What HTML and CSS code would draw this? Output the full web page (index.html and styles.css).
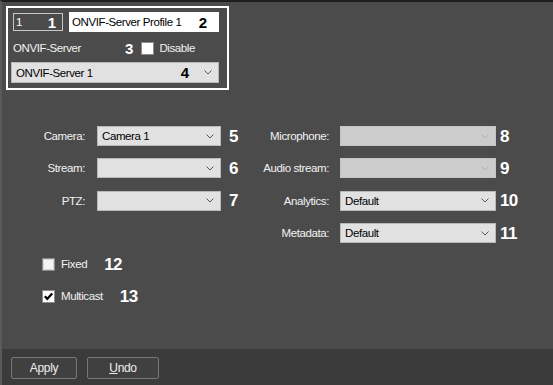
FILE: index.html
```html
<!DOCTYPE html>
<html>
<head>
<meta charset="utf-8">
<link rel="stylesheet" href="styles.css">
</head>
<body>
<div class="window">
  <main class="content">
    <section class="profile-box">
      <div class="row-ids">
        <div class="field field-id"><span>1</span><b class="num num-sm num-light">1</b></div>
        <div class="field field-name"><span>ONVIF-Server Profile 1</span><b class="num num-sm">2</b></div>
      </div>
      <div class="row-server">
        <span class="label">ONVIF-Server</span>
        <b class="num num-sm num-light num-3">3</b>
        <span class="checkbox"></span>
        <span class="label">Disable</span>
      </div>
      <div class="combo combo-server">
        <span class="combo-text">ONVIF-Server 1</span>
        <b class="num num-sm num-4">4</b>
        <svg class="chev" width="8" height="5" viewBox="0 0 8 5"><path d="M0.5 0.5 L4 4 L7.5 0.5" fill="none" stroke="#5a5a5a" stroke-width="1"/></svg>
      </div>
    </section>

    <section class="fields">
      <div class="col col-left">
        <div class="frow"><span class="flabel">Camera:</span><div class="combo"><span class="combo-text">Camera 1</span><svg class="chev" width="8" height="5" viewBox="0 0 8 5"><path d="M0.5 0.5 L4 4 L7.5 0.5" fill="none" stroke="#5a5a5a"/></svg></div><b class="num num-lg">5</b></div>
        <div class="frow"><span class="flabel">Stream:</span><div class="combo"><span class="combo-text"></span><svg class="chev" width="8" height="5" viewBox="0 0 8 5"><path d="M0.5 0.5 L4 4 L7.5 0.5" fill="none" stroke="#5a5a5a"/></svg></div><b class="num num-lg">6</b></div>
        <div class="frow"><span class="flabel">PTZ:</span><div class="combo"><span class="combo-text"></span><svg class="chev" width="8" height="5" viewBox="0 0 8 5"><path d="M0.5 0.5 L4 4 L7.5 0.5" fill="none" stroke="#5a5a5a"/></svg></div><b class="num num-lg">7</b></div>
      </div>
      <div class="col col-right">
        <div class="frow"><span class="flabel">Microphone:</span><div class="combo combo-disabled"><span class="combo-text"></span><svg class="chev" width="8" height="5" viewBox="0 0 8 5"><path d="M0.5 0.5 L4 4 L7.5 0.5" fill="none" stroke="#b0b0b0"/></svg></div><b class="num num-lg">8</b></div>
        <div class="frow"><span class="flabel">Audio stream:</span><div class="combo combo-disabled"><span class="combo-text"></span><svg class="chev" width="8" height="5" viewBox="0 0 8 5"><path d="M0.5 0.5 L4 4 L7.5 0.5" fill="none" stroke="#b0b0b0"/></svg></div><b class="num num-lg">9</b></div>
        <div class="frow"><span class="flabel">Analytics:</span><div class="combo"><span class="combo-text">Default</span><svg class="chev" width="8" height="5" viewBox="0 0 8 5"><path d="M0.5 0.5 L4 4 L7.5 0.5" fill="none" stroke="#5a5a5a"/></svg></div><b class="num num-lg">10</b></div>
        <div class="frow"><span class="flabel">Metadata:</span><div class="combo"><span class="combo-text">Default</span><svg class="chev" width="8" height="5" viewBox="0 0 8 5"><path d="M0.5 0.5 L4 4 L7.5 0.5" fill="none" stroke="#5a5a5a"/></svg></div><b class="num num-lg">11</b></div>
      </div>
    </section>

    <section class="checks">
      <div class="crow"><span class="checkbox checkbox-off"></span><span class="label">Fixed</span><b class="num num-lg num-light">12</b></div>
      <div class="crow"><span class="checkbox"><svg width="11" height="11" viewBox="0 0 11 11"><path d="M1.8 5.2 L4.3 7.8 L9.2 2.4" fill="none" stroke="#000" stroke-width="2.2"/></svg></span><span class="label">Multicast</span><b class="num num-lg num-light">13</b></div>
    </section>
  </main>
  <footer class="footer">
    <button class="btn btn-apply">Apply</button>
    <button class="btn btn-undo"><u>U</u>ndo</button>
  </footer>
</div>
</body>
</html>
```

FILE: styles.css
```css
* { box-sizing: border-box; }
html, body { margin: 0; padding: 0; }
body {
  width: 553px;
  height: 385px;
  overflow: hidden;
  background: #4b4b4b;
  font-family: "Liberation Sans", Arial, sans-serif;
  font-size: 11.5px;
  letter-spacing: -0.4px;
  color: #f2f2f2;
}
.window {
  width: 553px;
  height: 385px;
  display: flex;
  flex-direction: column;
  border-top: 2px solid #1f1f1f;
  border-left: 2px solid #5a5a5a;
}
.content {
  flex: 1;
  padding: 4px 0 0 4px;
}
.profile-box {
  width: 223px;
  height: 84px;
  border: 2px solid #ffffff;
  padding: 4px 8px 5px 3px;
  display: flex;
  flex-direction: column;
}
.row-ids {
  display: flex;
  align-items: center;
  padding-left: 2px;
  gap: 6px;
  height: 20px;
}
.field {
  display: flex;
  align-items: center;
  justify-content: space-between;
}
.field-id {
  width: 50px;
  height: 18px;
  border: 1px solid #c8c8c8;
  padding: 0 6px 0 2px;
  color: #ffffff;
}
.field-name {
  width: 150px;
  height: 20px;
  background: #ffffff;
  color: #000;
  padding: 0 12px 0 3px;
}
.num {
  font-family: "Liberation Sans", Arial, sans-serif;
  font-weight: bold;
  color: #000;
  line-height: 1;
  letter-spacing: 0;
}
.num-sm { font-size: 15px; }
.num-lg {
  font-size: 17px;
  letter-spacing: -0.6px;
  color: #ffffff;
}
.num-light { color: #ffffff; }
.row-server {
  display: flex;
  align-items: center;
  height: 16px;
  margin-top: 8px;
  padding-left: 2px;
}
.num-3 { margin-left: 44px; }
.row-server .checkbox { margin-left: 8px; margin-right: 5px; }
.checkbox {
  display: inline-flex;
  align-items: center;
  justify-content: center;
  width: 13px;
  height: 13px;
  background: #ffffff;
  border: 1px solid #8c8c8c;
  flex: none;
}
.checkbox-off {
  background: #f4f4f4;
  box-shadow: inset 0 0 0 1px #d6d6d6;
}
.combo {
  display: flex;
  align-items: center;
  height: 20px;
  background: #e1e1e1;
  border: 1px solid #b9b9b9;
  color: #000;
  padding: 0 6px 0 4px;
}
.combo-text { flex: 1; white-space: nowrap; }
.combo-server {
  width: 208px;
  height: 21px;
  margin-top: 6px;
}
.num-4 { margin-right: 15px; }
.chev { flex: none; }
.combo-disabled {
  background: #cccccc;
  border-color: #c4c4c4;
}
.fields {
  display: flex;
  gap: 10px;
  margin-top: 36px;
  padding-left: 19px;
}
.col {
  display: flex;
  flex-direction: column;
  gap: 12.4px;
}
.frow {
  display: flex;
  align-items: center;
  height: 20px;
}
.flabel {
  text-align: right;
  white-space: nowrap;
}
.col-left .flabel { width: 60px; margin-right: 12px; }
.col-left .combo { width: 124px; }
.col-left .num { margin-left: 8px; width: 20px; }
.col-right .flabel { width: 70px; margin-right: 11px; }
.col-right .combo { width: 156px; }
.col-right .num { margin-left: 4px; }
.checks {
  display: flex;
  flex-direction: column;
  gap: 16px;
  margin-top: 13px;
  padding-left: 36px;
}
.crow {
  display: flex;
  align-items: center;
  height: 16px;
}
.crow .checkbox { margin-right: 6px; }
.crow .num { margin-left: 17px; }
.footer {
  height: 36px;
  background: #3b3b3b;
  display: flex;
  align-items: flex-start;
  gap: 10px;
  padding: 8px 0 0 9px;
}
.btn {
  height: 22px;
  background: #404040;
  border: 1px solid #777777;
  border-radius: 2px;
  color: #efefef;
  font-family: inherit;
  font-size: 12px;
  letter-spacing: -0.3px;
  padding: 0;
}
.btn-apply { width: 66px; }
.btn-undo { width: 72px; }
```
